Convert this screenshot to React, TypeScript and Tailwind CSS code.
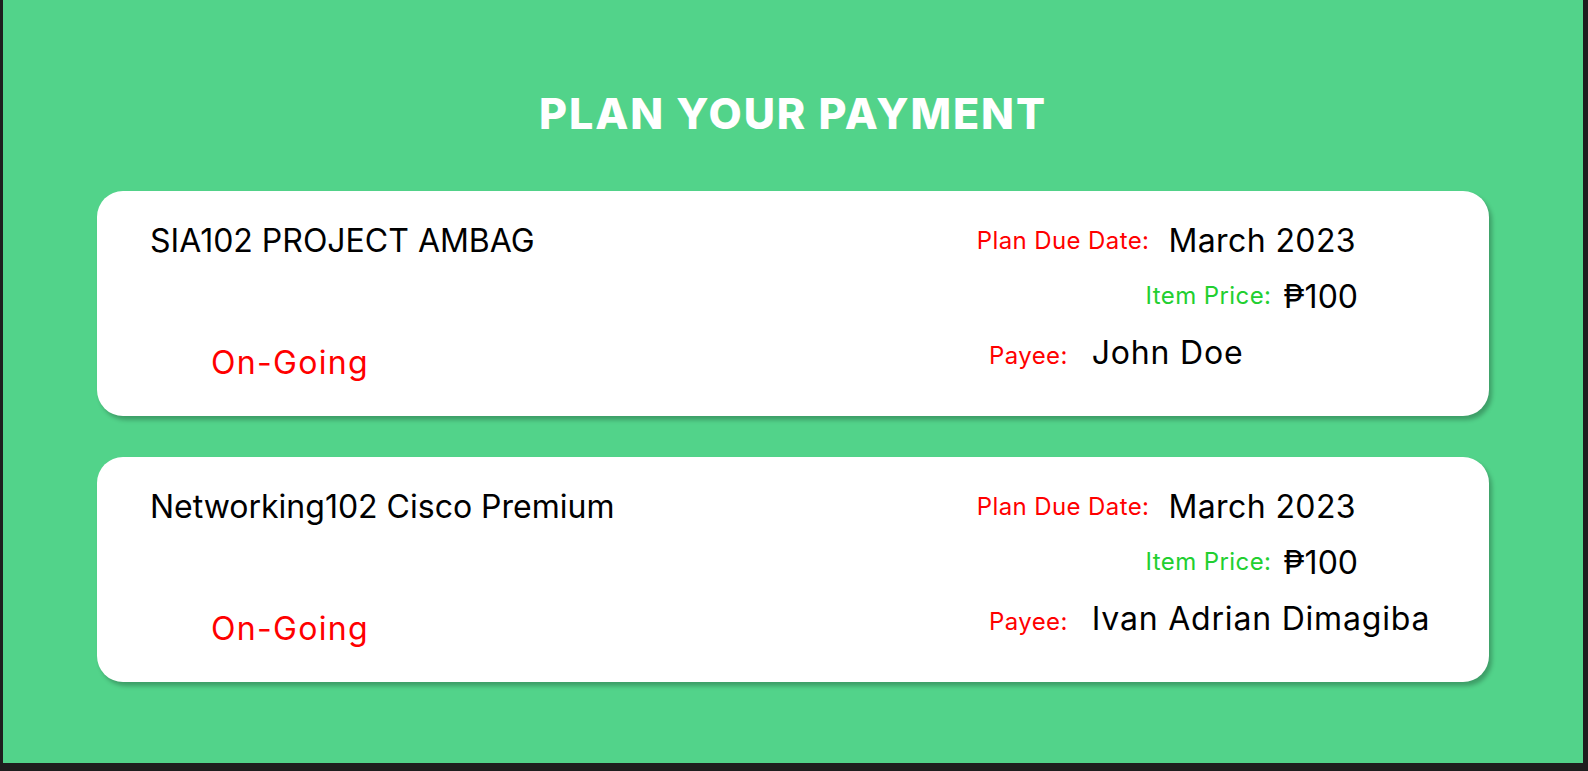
const plans = [
  { name: 'SIA102 PROJECT AMBAG', due: 'March 2023', price: '₱100', payee: 'John Doe', status: 'On-Going' },
  { name: 'Networking102 Cisco Premium', due: 'March 2023', price: '₱100', payee: 'Ivan Adrian Dimagiba', status: 'On-Going' },
];

type Plan = (typeof plans)[number];

function PlanCard({ plan }: { plan: Plan }) {
  return (
    <div className="flex justify-between rounded-[26px] bg-white pl-[53px] pr-[135px] pt-[34px] pb-[37px] shadow-[3px_4px_4px_rgba(0,0,0,0.25)]">
      <div className="flex flex-col">
        <div className="text-[32px] leading-none text-black whitespace-nowrap">{plan.name}</div>
        <div className="mt-[90px] ml-[61px] text-[32px] leading-none tracking-[1.3px] text-[#ff0000]">{plan.status}</div>
      </div>

      {/* right side details */}
      <div className="flex w-[377px] shrink-0 flex-col gap-[24px] whitespace-nowrap">
        <div className="-mr-[2px] flex items-center justify-end gap-[19px]">
          <span className="shrink-0 text-[24px] leading-none tracking-[0.4px] text-[#ff0000]">Plan Due Date:</span>
          <span className="shrink-0 text-[32px] leading-none tracking-[0.4px] text-black">{plan.due}</span>
        </div>
        <div className="-mr-[4px] flex items-center justify-end gap-[12px]">
          <span className="mb-[2px] shrink-0 text-[24px] leading-none tracking-[0.4px] text-[#22cf30]">Item Price:</span>
          <span className="shrink-0 text-[32px] leading-none text-black">{plan.price}</span>
        </div>
        <div className="flex items-baseline gap-[24px] pl-[12px]">
          <span className="shrink-0 text-[24px] leading-none tracking-[0.4px] text-[#ff0000]">Payee:</span>
          <span className="shrink-0 text-[32px] leading-none tracking-[0.8px] text-black">{plan.payee}</span>
        </div>
      </div>
    </div>
  );
}

export default function App() {
  return (
    <div className="flex h-[771px] w-full bg-[#1e1e1e] pl-[3px] pr-[5px] pb-[8px] font-['Inter',sans-serif]">
      <div className="flex flex-1 flex-col bg-[#52d38a] px-[94px] pt-[92px]">
        <h1 className="text-center text-[43px] font-extrabold leading-none tracking-[1.9px] text-white">PLAN YOUR PAYMENT</h1>

        <div className="mt-[56px] flex flex-col gap-[41px]">
          {plans.map((p) => (
            <PlanCard key={p.name} plan={p} />
          ))}
        </div>
      </div>
    </div>
  );
}
